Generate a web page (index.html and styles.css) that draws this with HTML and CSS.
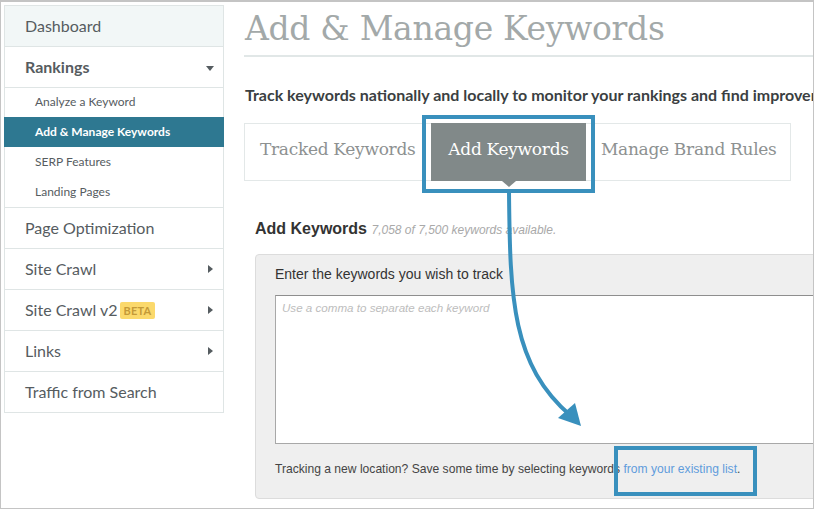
FILE: index.html
```html
<!DOCTYPE html>
<html>
<head>
<meta charset="utf-8">
<link rel="stylesheet" href="styles.css">
</head>
<body>
<div class="frame">
  <nav class="sidebar">
    <div class="item dash">Dashboard</div>
    <div class="item rank">Rankings <span class="caret-down"></span></div>
    <ul class="sub">
      <li>Analyze a Keyword</li>
      <li class="active">Add &amp; Manage Keywords</li>
      <li>SERP Features</li>
      <li>Landing Pages</li>
    </ul>
    <div class="item">Page Optimization</div>
    <div class="item">Site Crawl <span class="caret-right"></span></div>
    <div class="item">Site Crawl v2<span class="beta">BETA</span> <span class="caret-right"></span></div>
    <div class="item">Links <span class="caret-right"></span></div>
    <div class="item last">Traffic from Search</div>
  </nav>
  <main class="main">
    <h1 class="title">Add &amp; Manage Keywords</h1>
    <p class="lead">Track keywords nationally and locally to monitor your rankings and find improvement opportunities.</p>
    <div class="tabs">
      <div class="tab tab-first">Tracked Keywords</div>
      <div class="tab tab-active">Add Keywords<span class="annot annot-tab"></span></div>
      <div class="tab tab-last">Manage Brand Rules</div>
    </div>
    <section class="add">
      <h2 class="add-head">Add Keywords <span class="avail">7,058 of 7,500 keywords available.</span></h2>
      <div class="panel">
        <label class="panel-label">Enter the keywords you wish to track</label>
        <textarea class="kw" placeholder="Use a comma to separate each keyword"></textarea>
        <p class="hint">Tracking a new location? Save some time by selecting keywords <a class="link">from your existing list<span class="annot annot-link"></span></a>.</p>
      </div>
    </section>
  </main>
  <svg class="arrow" width="814" height="509" viewBox="0 0 814 509">
    <path d="M509 191 C 510 300, 512 365, 571 416" fill="none" stroke="#3990bd" stroke-width="4"/>
    <polygon points="581,426 575,403 558,418" fill="#3990bd"/>
  </svg>
</div>
</body>
</html>
```
FILE: styles.css
```css
* { box-sizing: border-box; }
html, body { margin: 0; padding: 0; background: #fff; }
.frame {
  width: 814px; height: 509px;
  border: 1px solid #c4c4c4; border-top-width: 2px;
  overflow: hidden; position: relative;
  display: flex; align-items: flex-start;
  font-family: Lato, "Liberation Sans", sans-serif;
}
.sidebar {
  width: 220px; flex: none;
  margin: 3px 0 0 3px;
  border: 1px solid #dfe5e5;
  border-bottom: none;
  color: #565c5f;
}
.item {
  height: 41px; border-bottom: 1px solid #dfe5e5;
  padding-left: 20px; font-size: 16px; line-height: 40px;
  position: relative; display: flex; align-items: center;
}
.dash { background: #f2f7f7; }
.rank { font-weight: 700; font-size: 16px; }
.caret-down {
  position: absolute; right: 9px; top: 19px;
  border-left: 4px solid transparent; border-right: 4px solid transparent;
  border-top: 5px solid #555c60;
}
.caret-right {
  position: absolute; right: 10px; top: 16px;
  border-top: 4px solid transparent; border-bottom: 4px solid transparent;
  border-left: 5px solid #555c60;
}
.beta {
  display: inline-block; margin-left: 2px;
  background: #fbd96c; color: #c49a38;
  font-size: 11px; font-weight: 700; line-height: 17px;
  padding: 0 4px; border-radius: 2px; letter-spacing: 0.2px;
}
.sub { list-style: none; margin: 0; padding: 0; border-bottom: 1px solid #dfe5e5; }
.sub li {
  height: 30px; line-height: 30px; font-size: 12px;
  padding-left: 30px;
}
.sub li:first-child { height: 29px; line-height: 28px; }
.sub li.active {
  background: #2e7891; color: #fff; font-weight: 700;
  margin: 0 -1px; padding-left: 31px;
}
.main { flex: 1; min-width: 0; margin-left: 20px; }
.title {
  margin: 0; height: 55px;
  border-bottom: 2px solid #e1e7e7;
  font-family: "DejaVu Serif", serif; font-weight: 400;
  font-size: 33px; letter-spacing: -0.3px; line-height: 53px; color: #a3a9a9;
  padding-left: 1px; white-space: nowrap;
}
.lead {
  margin: 28px 0 0 1px; font-size: 16px; line-height: 20px;
  font-weight: 700; color: #3b3f42; white-space: nowrap;
}
.tabs {
  margin-top: 18px; width: 547px; height: 58px;
  border: 1px solid #e3e8e8; display: flex;
  font-family: "DejaVu Serif", serif; font-size: 17px; letter-spacing: -0.3px; color: #8d9191;
}
.tab { line-height: 51px; white-space: nowrap; }
.tab-first { width: 186px; padding-left: 15px; }
.tab-active {
  width: 155px; margin: -1px 0; height: 58px; line-height: 53px;
  background: #818989; color: #fff; text-align: center; position: relative;
}
.tab-active::after {
  content: ""; position: absolute; left: 71px; bottom: -6px;
  border-left: 7px solid transparent; border-right: 7px solid transparent;
  border-top: 6px solid #818989;
}
.tab-last { padding-left: 15px; }
.annot { position: absolute; border: 4px solid #3990bd; pointer-events: none; }
.annot-tab { left: -9px; right: -9px; top: -8px; bottom: -12px; }
.add { margin: 37px 0 0 11px; font-family: "Liberation Sans", Arial, sans-serif; }
.add-head { margin: 0; font-size: 16px; line-height: 21px; color: #333; font-weight: 700; }
.avail { font-size: 12px; font-style: italic; font-weight: 400; color: #a9a9a9; }
.panel {
  margin-top: 13px; width: 620px; height: 245px;
  background: #efefef; border: 1px solid #dcdcdc; border-radius: 4px;
  padding: 10px 19px 0;
}
.panel-label { display: block; font-size: 14px; line-height: 18px; color: #333; }
.kw {
  display: block; margin-top: 12px; width: 620px; height: 149px;
  border: 1px solid #a8a8a8; border-top-color: #8e8e8e; background: #fff;
  padding: 5px 6px; resize: none; font-family: "Liberation Sans", Arial, sans-serif;
  font-size: 11.6px; outline: none;
}
.kw::placeholder { color: #bdbdbd; font-style: italic; }
.hint { margin: 18px 0 0; font-size: 12.1px; line-height: 14px; color: #444; white-space: nowrap; }
.link { color: #5f9cdc; position: relative; }
.annot-link { left: -9px; right: -20px; top: -16px; bottom: -20px; }
.arrow { position: absolute; left: -1px; top: -2px; pointer-events: none; }
```
